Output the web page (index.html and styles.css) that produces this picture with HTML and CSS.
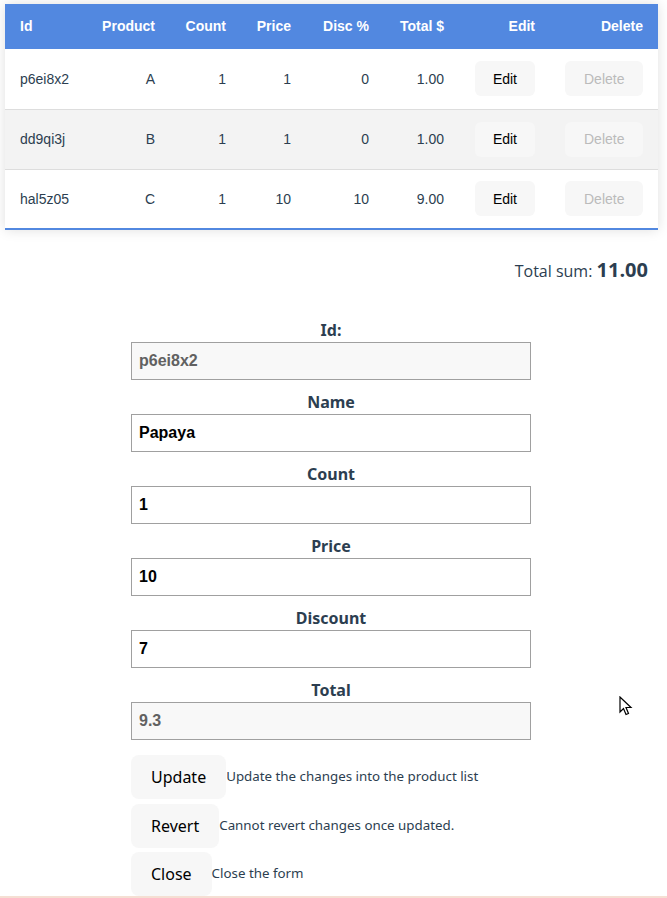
FILE: index.html
```html
<!DOCTYPE html>
<html>
<head>
<meta charset="utf-8">
<link rel="stylesheet" href="styles.css">
</head>
<body>
<div class="page">
  <table class="products">
    <colgroup>
      <col class="c-id"><col class="c-prod"><col class="c-count"><col class="c-price"><col class="c-disc"><col class="c-total"><col class="c-edit"><col class="c-del">
    </colgroup>
    <thead>
      <tr><th class="left">Id</th><th>Product</th><th>Count</th><th>Price</th><th>Disc %</th><th>Total $</th><th>Edit</th><th>Delete</th></tr>
    </thead>
    <tbody>
      <tr><td class="left">p6ei8x2</td><td>A</td><td>1</td><td>1</td><td>0</td><td>1.00</td><td><button class="tbtn">Edit</button></td><td><button class="tbtn" disabled>Delete</button></td></tr>
      <tr class="alt"><td class="left">dd9qi3j</td><td>B</td><td>1</td><td>1</td><td>0</td><td>1.00</td><td><button class="tbtn">Edit</button></td><td><button class="tbtn" disabled>Delete</button></td></tr>
      <tr><td class="left">hal5z05</td><td>C</td><td>1</td><td>10</td><td>10</td><td>9.00</td><td><button class="tbtn">Edit</button></td><td><button class="tbtn" disabled>Delete</button></td></tr>
    </tbody>
  </table>

  <div class="sum">Total sum: <b>11.00</b></div>

  <form class="editor">
    <label class="lbl">Id:</label>
    <input class="field ro" value="p6ei8x2" readonly>
    <label class="lbl">Name</label>
    <input class="field" value="Papaya">
    <label class="lbl">Count</label>
    <input class="field" value="1">
    <label class="lbl">Price</label>
    <input class="field" value="10">
    <label class="lbl">Discount</label>
    <input class="field" value="7">
    <label class="lbl">Total</label>
    <input class="field ro" value="9.3" readonly>

    <div class="actions">
      <div class="act"><button type="button" class="fbtn">Update</button><span class="desc">Update the changes into the product list</span></div>
      <div class="act"><button type="button" class="fbtn">Revert</button><span class="desc">Cannot revert changes once updated.</span></div>
      <div class="act"><button type="button" class="fbtn">Close</button><span class="desc">Close the form</span></div>
    </div>
  </form>
  <div class="footer"></div>
</div>
<svg class="cursor" width="14" height="22" viewBox="0 0 14 22"><path d="M1 1 L1 16 L4.5 12.5 L7 18.5 L9.5 17.5 L7 11.5 L12 11.5 Z" fill="#fff" stroke="#000" stroke-width="1.2" stroke-linejoin="miter"/></svg>
</body>
</html>
```

FILE: styles.css
```css
html, body {
  margin: 0;
  padding: 0;
  background: #fff;
}
.page {
  position: relative;
  padding-top: 4px;
}
.products {
  border-collapse: collapse;
  table-layout: fixed;
  width: 653px;
  margin-left: 5px;
  font-family: "Liberation Sans", Arial, sans-serif;
  font-size: 14px;
  color: #2c3e50;
  box-shadow: 0 0 12px rgba(0,0,0,0.13);
  border-bottom: 2px solid #5288e0;
}
.c-id { width: 80px; }
.c-prod { width: 85px; }
.c-count { width: 71px; }
.c-price { width: 65px; }
.c-disc { width: 78px; }
.c-total { width: 75px; }
.c-edit { width: 91px; }
.c-del { width: 108px; }
.products th {
  background: #5288e0;
  color: #fff;
  font-weight: bold;
  height: 45px;
  padding: 0 15px 1px;
  box-sizing: border-box;
  text-align: right;
}
.products td {
  height: 60px;
  padding: 0 15px;
  box-sizing: border-box;
  text-align: right;
  border-bottom: 1px solid #dddddd;
}
.products tbody tr:last-child td { border-bottom: none; height: 60px; }
.products .left { text-align: left; }
.products tr.alt td { background: #f3f3f3; }
.tbtn {
  font-family: "Liberation Sans", Arial, sans-serif;
  font-size: 14px;
  color: #000;
  background: #f7f7f7;
  border: none;
  border-radius: 6px;
  height: 35px;
  padding: 0 18px;
}
.tbtn:disabled { color: #bbbbbb; background: #f7f7f7; padding: 0 19px; }
.sum {
  font-family: "Open Sans", "Noto Sans", sans-serif;
  font-size: 16px;
  color: #2c3e50;
  text-align: right;
  padding-right: 19px;
  margin-top: 28px;
  line-height: 24px;
}
.sum b { font-size: 20px; font-weight: bold; }
.editor {
  width: 400px;
  margin: 35px 0 0 131px;
  display: flex;
  flex-direction: column;
}
.lbl {
  display: block;
  text-align: center;
  font-family: "Noto Sans", sans-serif;
  font-weight: bold;
  font-size: 16px;
  line-height: 24px;
  color: #2c3e50;
  margin-top: 10px;
}
.lbl:first-child { margin-top: 0; }
.field {
  box-sizing: border-box;
  width: 400px;
  height: 38px;
  border: 1px solid #a0a0a0;
  padding: 0 7px;
  font-family: "Liberation Sans", Arial, sans-serif;
  font-weight: bold;
  font-size: 16px;
  color: #000;
  background: #fff;
  margin: 0;
}
.field.ro { background: #f8f8f8; color: #616161; }
.actions {
  margin-top: 15px;
  display: flex;
  flex-direction: column;
  gap: 4.5px;
}
.act {
  display: flex;
  align-items: baseline;
}
.fbtn {
  font-family: "Noto Sans", sans-serif;
  font-size: 16px;
  color: #000;
  background: #f7f7f7;
  border: none;
  border-radius: 8px;
  height: 44px;
  padding: 0 20px;
}
.desc {
  font-family: "Noto Sans", sans-serif;
  font-size: 13.33px;
  color: #2c3e50;
  position: relative;
  top: -2px;
}
.footer {
  height: 40px;
  background: #f5dfd3;
}
.cursor {
  position: absolute;
  left: 619px;
  top: 696px;
}
```
